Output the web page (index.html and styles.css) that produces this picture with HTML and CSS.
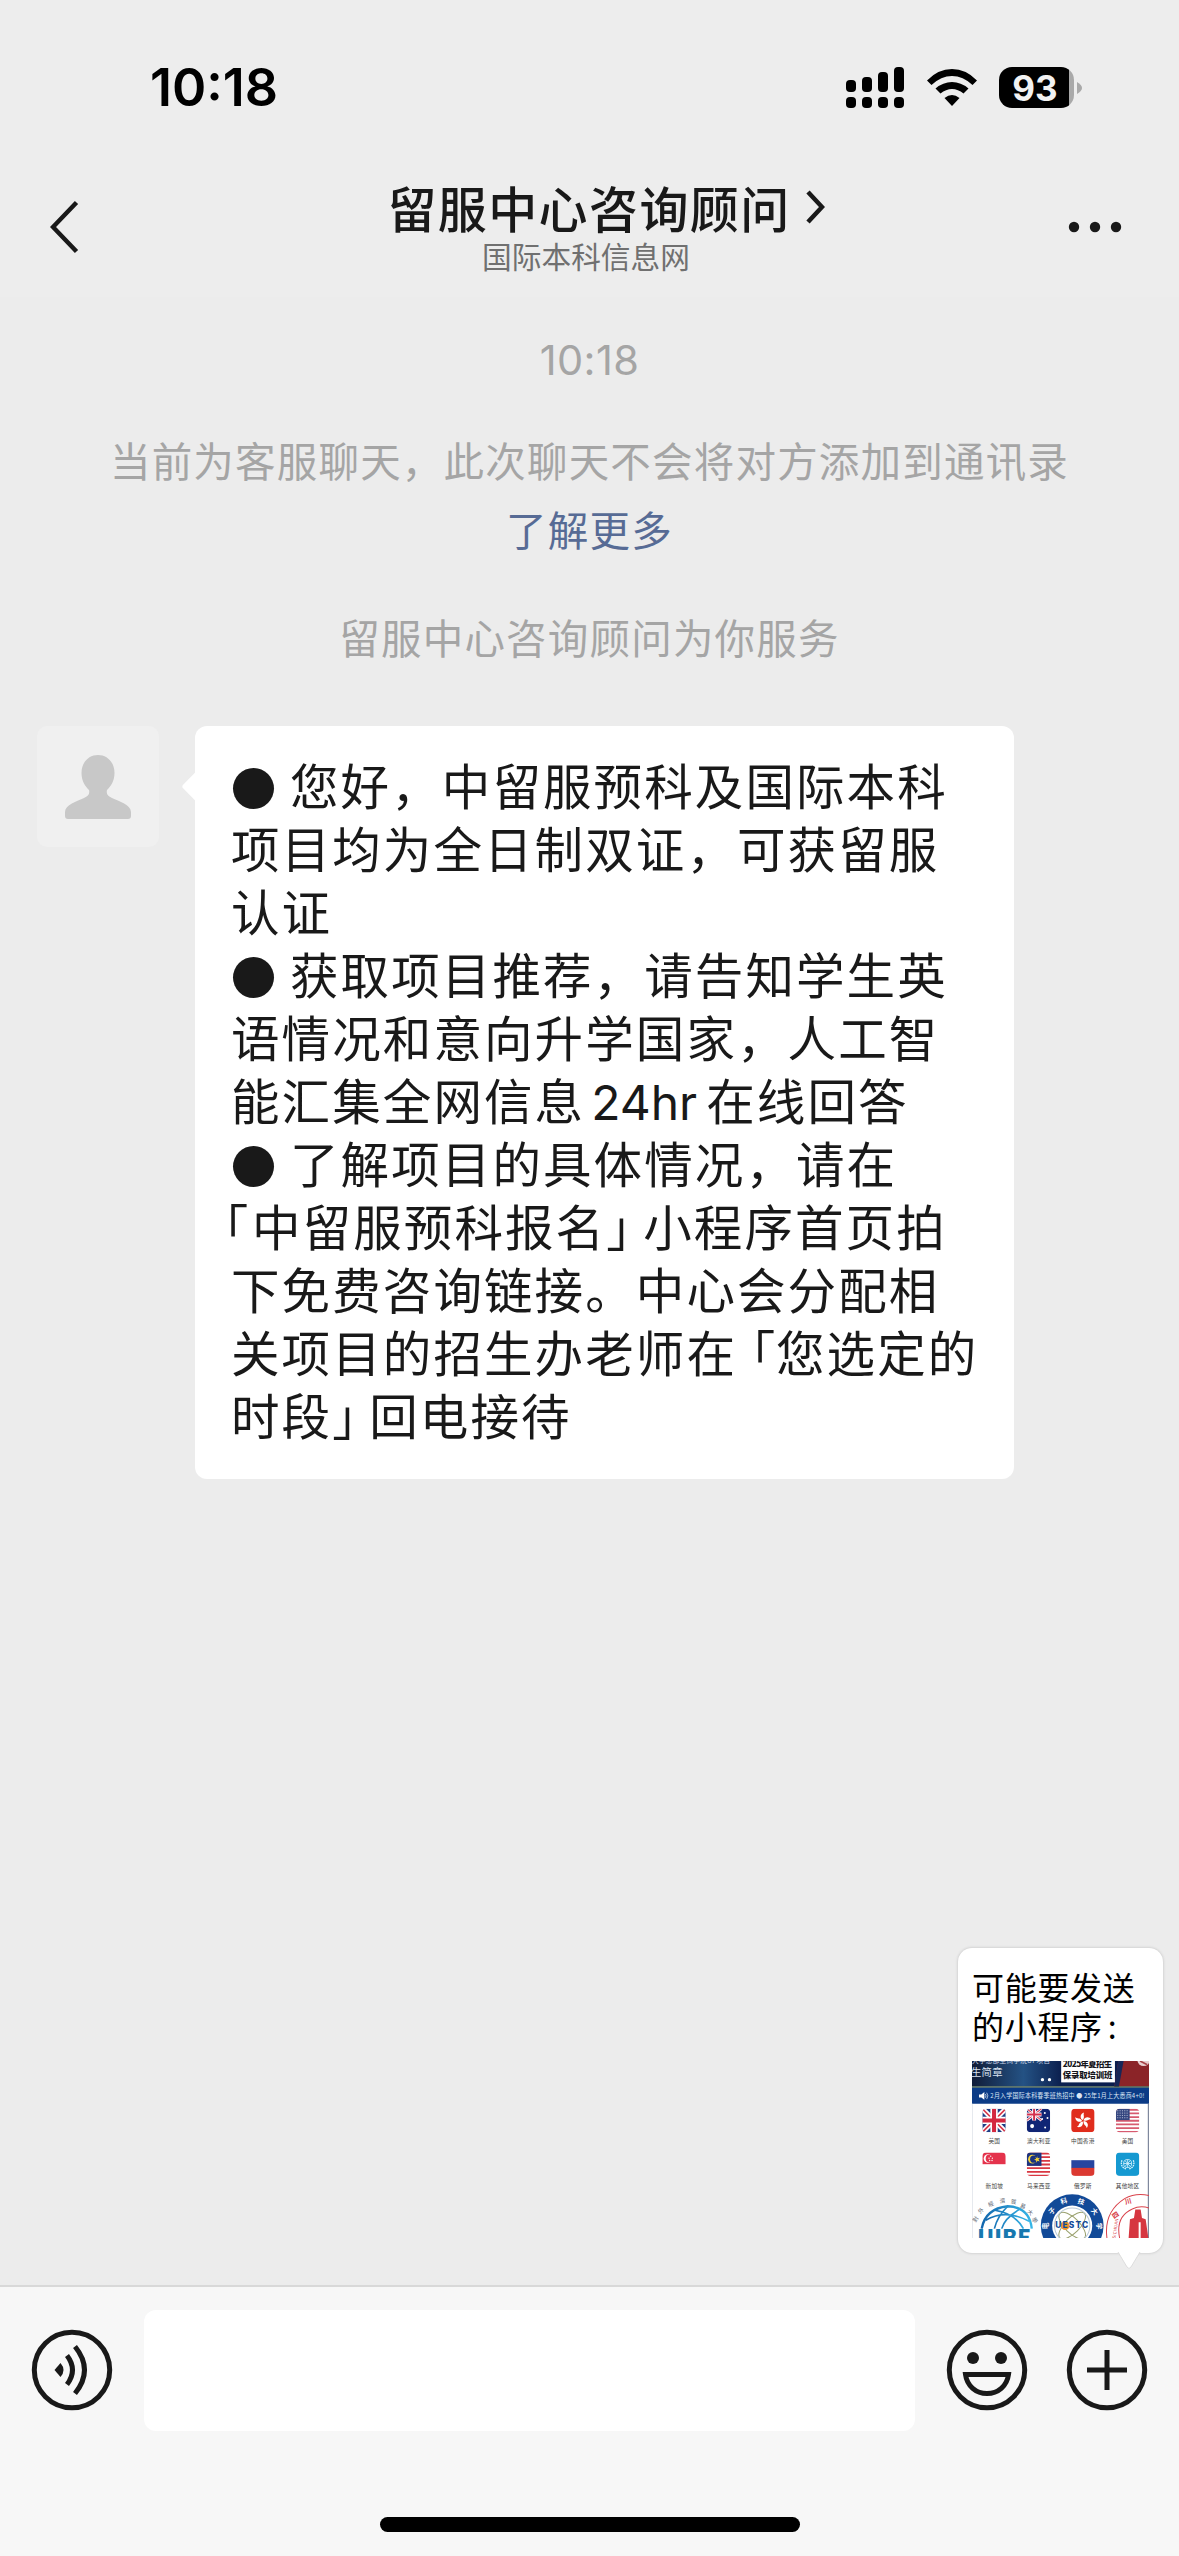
FILE: index.html
```html
<!DOCTYPE html>
<html lang="zh-CN">
<head>
<meta charset="utf-8">
<title>留服中心咨询顾问</title>
<link rel="stylesheet" href="styles.css">
</head>
<body>
<div class="screen">
  <header class="top">
    <div class="status">
      <span class="clock">10:18</span>
      <div class="indicators">
        <svg class="signal" width="58" height="41" viewBox="0 0 58 41">
          <rect x="0" y="13" width="10" height="12" rx="4"/><rect x="16" y="10" width="10" height="15" rx="4"/><rect x="32" y="5" width="10" height="20" rx="4"/><rect x="48" y="0" width="10" height="25" rx="4"/>
          <rect x="0" y="30" width="10" height="11" rx="4"/><rect x="16" y="30" width="10" height="11" rx="4"/><rect x="32" y="30" width="10" height="11" rx="4"/><rect x="48" y="30" width="10" height="11" rx="4"/>
        </svg>
        <svg class="wifi" width="50" height="38" viewBox="0 0 50 38">
          <path d="M0 11.500Q11 0 25 0T50 11.500L45.500 16Q36 7 25 7T4.500 16Z"/>
          <path d="M8.500 19.500Q16 13 25 13T41.500 19.500L36.500 24.500Q31 20 25 20T13.500 24.500Z"/>
          <path d="M17.500 29Q25 23 32.500 29L25 37Z"/>
        </svg>
        <div class="battery"><span class="level">93</span><svg class="nub" width="5" height="12" viewBox="0 0 5 12"><path d="M0 0Q5 3 5 6T0 12Z"/></svg></div>
      </div>
    </div>
    <div class="nav">
      <svg class="back" width="29" height="54" viewBox="0 0 29 54"><path d="M26.500 2.500L3 27L26.500 51.500"/></svg>
      <div class="heading">
        <div class="title">留服中心咨询顾问<svg class="more" width="19" height="34" viewBox="0 0 19 34"><path d="M2 2L16 17L2 32"/></svg></div>
        <div class="subtitle">国际本科信息网</div>
      </div>
      <svg class="dots" width="54" height="12" viewBox="0 0 54 12"><circle cx="6" cy="6" r="5.200"/><circle cx="27" cy="6" r="5.200"/><circle cx="48" cy="6" r="5.200"/></svg>
    </div>
  </header>

  <main class="chat">
    <div class="time">10:18</div>
    <div class="notice">当前为客服聊天，此次聊天不会将对方添加到通讯录</div>
    <a class="notice link">了解更多</a>
    <div class="notice service">留服中心咨询顾问为你服务</div>

    <div class="message">
      <div class="avatar">
        <svg width="66" height="64" viewBox="0 0 66 64"><path d="M33 0C42 0 49.500 7 49.500 18C49.500 26 46 31 42 35C41 39 43 41 47 43C54 46 66 50 66 57V61Q66 64 63 64H3Q0 64 0 61V57C0 50 12 46 19 43C23 41 25 39 24 35C20 31 16.500 26 16.500 18C16.500 7 24 0 33 0Z"/></svg>
      </div>
      <div class="bubble">
        <p><i class="bullet"></i>您好，中留服预科及国际本科</p>
        <p>项目均为全日制双证，可获留服</p>
        <p>认证</p>
        <p><i class="bullet"></i>获取项目推荐，请告知学生英</p>
        <p>语情况和意向升学国家，人工智</p>
        <p>能汇集全网信息<span class="latin">24hr</span>在线回答</p>
        <p><i class="bullet"></i>了解项目的具体情况，请在</p>
        <p><span class="bracket start">「</span>中留服预科报名<span class="bracket close">」</span>小程序首页拍</p>
        <p>下免费咨询链接。中心会分配相</p>
        <p>关项目的招生办老师在<span class="bracket open">「</span>您选定的</p>
        <p>时段<span class="bracket close">」</span>回电接待</p>
      </div>
    </div>

    <aside class="suggest">
      <p>可能要发送</p>
      <p>的小程序<span class="colon">:</span></p>
      <svg class="thumb" width="177" height="177" viewBox="36 33 530 530">
        <defs>
          <linearGradient id="navy" x1="0" x2="1"><stop offset="0" stop-color="#101c38"/><stop offset=".35" stop-color="#245284"/><stop offset=".6" stop-color="#0c2150"/><stop offset="1" stop-color="#0a1d4d"/></linearGradient>
          <linearGradient id="globe" x1="0" x2="1"><stop offset="0" stop-color="#1166ad"/><stop offset="1" stop-color="#36b6e8"/></linearGradient>
          <clipPath id="tile"><rect width="70" height="70" rx="12"/></clipPath>
        </defs>
        <rect x="36" y="33" width="530" height="530" fill="#fff"/>
        <rect x="36" y="33" width="440" height="76" fill="url(#navy)"/>
        <path d="M474 33H566V109H462Z" fill="#8b2428"/>
        <path d="M474 33H490L476 109H462Z" fill="#172657"/>
        <text x="36" y="40" font-size="20" fill="#c9d5e6">大学总部生商学院UP项目</text>
        <text x="33" y="79" font-size="31" fill="#d9e1ee">生简章</text>
        <circle cx="247" cy="89" r="5" fill="#fff"/><circle cx="268" cy="89" r="5" fill="#fff"/>
        <rect x="303" y="28" width="161" height="69" fill="#fff"/>
        <g font-size="25" font-weight="900" fill="#15151b"><text x="308" y="51" textLength="148">2025年夏招生</text><text x="308" y="84" textLength="149">保录取培训班</text></g>
        <circle cx="550" cy="29" r="19" fill="#e8cfd0"/><path d="M539 33L561 44" stroke="#a74347" stroke-width="5"/>
        <rect x="36" y="109" width="530" height="4" fill="#304d34"/>
        <rect x="36" y="113" width="530" height="48" fill="#0b3b86"/>
        <path d="M57 133H64L73 126V149L64 142H57Z" fill="#fff"/><path d="M76 132Q80 137 76 143M80 128Q87 137 80 147" fill="none" stroke="#fff" stroke-width="2"/>
        <text x="91" y="144" font-size="19" fill="#dce6f5" textLength="462" lengthAdjust="spacingAndGlyphs">2月入学国际本科春季班热招中 ● 25年1月上大悉商4+0!</text>
        <path d="M564 161V563" stroke="#667089" stroke-width="3"/><path d="M37 161V563" stroke="#d2d7df" stroke-width="2"/>

        <g transform="translate(67 176)" clip-path="url(#tile)">
          <rect width="70" height="70" fill="#203f86"/><path d="M0 0L70 70M70 0L0 70" stroke="#fff" stroke-width="15"/><path d="M0 0L70 70M70 0L0 70" stroke="#d8384b" stroke-width="5"/><path d="M35 0V70M0 35H70" stroke="#fff" stroke-width="22"/><path d="M35 0V70M0 35H70" stroke="#d42840" stroke-width="12"/>
        </g>
        <g transform="translate(200 176)" clip-path="url(#tile)">
          <rect width="70" height="70" fill="#102575"/><path d="M0 0L44 35M44 0L0 35" stroke="#fff" stroke-width="8"/><path d="M0 0L44 35M44 0L0 35" stroke="#db3b55" stroke-width="3"/><path d="M22 0V35M0 17H44" stroke="#fff" stroke-width="12"/><path d="M22 0V35M0 17H44" stroke="#d3304d" stroke-width="6"/><g fill="#fff"><circle cx="16" cy="52" r="6"/><circle cx="54" cy="13" r="3"/><circle cx="46" cy="31" r="3"/><circle cx="62" cy="28" r="3"/><circle cx="55" cy="56" r="3"/></g>
        </g>
        <g transform="translate(333 176)" clip-path="url(#tile)">
          <rect width="70" height="70" fill="#e02d1d"/>
          <g transform="translate(35 36)" fill="#fff"><path id="petal" d="M-1-2C-10-9-8-22 4-25C-1-18 8-12-1-2Z"/><use href="#petal" transform="rotate(72)"/><use href="#petal" transform="rotate(144)"/><use href="#petal" transform="rotate(216)"/><use href="#petal" transform="rotate(288)"/></g>
        </g>
        <g transform="translate(467 176)" clip-path="url(#tile)">
          <rect width="70" height="70" fill="#fff"/><path d="M0 3H70M0 14H70M0 25H70M0 36H70M0 47H70M0 58H70M0 69H70" stroke="#d75b70" stroke-width="5.500"/><rect width="41" height="34" fill="#34467f"/><path d="M4 6H39M4 13H39M4 20H39M4 27H39" stroke="#d5daeb" stroke-width="2.500" stroke-dasharray="3 4"/>
        </g>
        <g transform="translate(67 307)" clip-path="url(#tile)">
          <rect width="70" height="70" fill="#fff"/><rect width="70" height="35" fill="#e4334c"/><circle cx="17" cy="18" r="13" fill="#fff"/><circle cx="22" cy="18" r="12" fill="#e4334c"/><g fill="#fff"><circle cx="25" cy="11" r="2"/><circle cx="20" cy="17" r="2"/><circle cx="30" cy="17" r="2"/><circle cx="22" cy="24" r="2"/><circle cx="29" cy="24" r="2"/></g>
        </g>
        <g transform="translate(200 307)" clip-path="url(#tile)">
          <rect width="70" height="70" fill="#fff"/><path d="M0 3H70M0 14H70M0 25H70M0 36H70M0 47H70M0 58H70M0 69H70" stroke="#d93742" stroke-width="5.500"/><rect width="44" height="40" fill="#1c3480"/><circle cx="17" cy="20" r="13" fill="#f5d33b"/><circle cx="21" cy="20" r="11" fill="#1c3480"/><path d="M31 10L33 17L40 16L35 21L39 27L32 25L29 31L28 24L22 22L28 19L26 13L31 17Z" fill="#f5d33b"/>
        </g>
        <g transform="translate(333 307)" clip-path="url(#tile)"><rect width="70" height="70" fill="#fff"/><rect y="23" width="70" height="24" fill="#2745a0"/><rect y="46" width="70" height="24" fill="#db3931"/></g>
        <g transform="translate(467 307)" clip-path="url(#tile)">
          <rect width="70" height="70" fill="#1599d1"/><g fill="none" stroke="#d7f2fc" stroke-width="2.500"><circle cx="35" cy="33" r="12"/><path d="M35 21V45M23 33H47M27 24L43 42M43 24L27 42"/><path d="M18 23Q11 43 32 50M52 23Q59 43 38 50" stroke-dasharray="5 2" stroke-width="4"/></g>
        </g>
        <g font-size="17" fill="#454545" text-anchor="middle">
          <text x="103" y="279">英国</text><text x="236" y="279">澳大利亚</text><text x="368" y="279">中国香港</text><text x="502" y="279">美国</text>
          <text x="103" y="412">新加坡</text><text x="236" y="412">马来西亚</text><text x="368" y="412">俄罗斯</text><text x="502" y="412">其他地区</text>
        </g>

        <g fill="none" stroke="url(#globe)" stroke-width="5">
          <path d="M65 535Q76 475 143 468Q208 470 215 535" stroke-width="7"/><path d="M77 510Q138 475 207 513M105 480Q166 490 190 535M143 468Q112 498 103 535M178 477Q133 504 125 535"/>
        </g>
        <g font-size="17" fill="#5b6470"><text transform="translate(47 517) rotate(-58)">對</text><text transform="translate(61 491) rotate(-43)">外</text><text transform="translate(88 470) rotate(-25)">經</text><text transform="translate(120 459) rotate(-8)">濟</text><text transform="translate(151 460) rotate(7)">貿</text><text transform="translate(178 470) rotate(22)">易</text><text transform="translate(200 486) rotate(40)">大</text><text transform="translate(214 505) rotate(60)">學</text></g>
        <text x="52" y="586" font-size="66" font-weight="900" fill="#1778af" textLength="162">UIBE</text>

        <circle cx="336" cy="526" r="94" fill="#124a98"/><circle cx="336" cy="526" r="60" fill="#fff"/>
        <g fill="none" stroke="#99a06c" stroke-width="3"><ellipse cx="336" cy="526" rx="52" ry="22" transform="rotate(45 336 526)"/><ellipse cx="336" cy="526" rx="52" ry="22" transform="rotate(-45 336 526)"/><circle cx="336" cy="526" r="53" stroke="#b9c9d7"/></g>
        <circle cx="315" cy="526" r="13" fill="#ef952d"/>
        <text x="285" y="534" font-family="Inter" font-size="25" font-weight="800" fill="#124a98" textLength="100">UESTC</text>
        <g font-size="20" font-weight="700" fill="#fff"><text transform="translate(264 537) rotate(-90)">电</text><text transform="translate(274 494) rotate(-48)">子</text><text transform="translate(303 462) rotate(-15)">科</text><text transform="translate(351 458) rotate(17)">技</text><text transform="translate(391 481) rotate(50)">大</text><text transform="translate(409 518) rotate(85)">学</text></g>

        <g fill="none" stroke="#d9434c" stroke-width="3"><path d="M440 563Q430 485 493 445Q528 426 566 436"/><path d="M478 563Q465 499 516 476Q540 464 566 473"/></g>
        <g fill="#d63640"><path d="M505 563L509 507L521 503L525 478H541L545 503L556 507L564 563H541V516H535V563Z"/><g font-size="20" font-weight="700"><text transform="translate(461 506) rotate(-34)">四</text><text transform="translate(496 463) rotate(-14)">川</text></g><text transform="translate(466 565) rotate(-82)" font-size="13">SICHUAN</text></g>
      </svg>
      <svg class="pointer" width="24" height="19" viewBox="0 0 24 19"><path d="M1 0L10 15Q12 18 14 15L23 0"/></svg>
    </aside>
  </main>

  <footer class="composer">
    <div class="controls">
      <svg class="icon" width="82" height="82" viewBox="-41 -41 82 82"><circle r="37.700"/><path class="fill" d="M-17.500 0L-11.500-7Q-5.500 0-11.500 7Z"/><path d="M-5-14.500Q6 0-5 14.500M3-23.500Q22 0 3 23.500"/></svg>
      <div class="input"></div>
      <svg class="icon emoji" width="82" height="82" viewBox="-41 -41 82 82"><circle r="37.700"/><circle class="fill" cx="-14" cy="-12" r="6"/><circle class="fill" cx="14" cy="-12" r="6"/><path d="M-21.500 4.500H21.500C20 16 11 23.500 0 23.500S-20 16-21.500 4.500Z"/></svg>
      <svg class="icon" width="82" height="82" viewBox="-41 -41 82 82"><circle r="37.700"/><path d="M0-20V20M-20 0H20"/></svg>
    </div>
    <div class="home"></div>
  </footer>
</div>
</body>
</html>
```
FILE: styles.css
```css
* { box-sizing: border-box; }
body, p { margin: 0; }
body { font-family: "Noto Sans CJK SC", sans-serif; background: #ececec; color: #191919; }
.screen { width: 1179px; height: 2556px; display: flex; flex-direction: column; overflow: hidden; }

.top { height: 297px; background: #ededed; flex: none; }
.status { height: 176px; padding: 0 97px 0 150px; display: flex; justify-content: space-between; align-items: center; }
.clock { font: 600 52px/60px Inter, sans-serif; letter-spacing: 0; color: #000; }
.indicators { display: flex; align-items: center; margin-top: -1px; }
.wifi { margin: 0 22px 0 23px; }
.battery { display: flex; align-items: center; gap: 3px; }
.level { width: 75px; height: 41px; border-radius: 13px; background: linear-gradient(90deg, #000 70px, #a9a9a9 70px); color: #f2f2f2; font: 700 35px/42px Inter, sans-serif; text-align: center; padding-right: 3px; }
.nub { fill: #a9a9a9; }

.nav { height: 121px; display: flex; align-items: flex-start; padding: 0 57px 0 50px; }
.back, .more { fill: none; stroke: #191919; stroke-width: 4.500; }
.back { margin-top: 24px; }
.heading { flex: 1; text-align: center; padding-left: 25px; margin-top: -2px; }
.title { height: 66px; line-height: 66px; font-size: 49px; font-weight: 500; letter-spacing: 1.400px; display: flex; justify-content: center; align-items: center; padding-left: 40px; }
.more { margin-left: 15px; }
.subtitle { font-size: 29.700px; line-height: 32px; color: #707070; }
.dots { margin-top: 45px; fill: #191919; }

.chat { flex: 1; display: flex; flex-direction: column; position: relative; }
.time { font: 400 41.500px/50px Inter, sans-serif; color: #a5a5a5; text-align: center; margin-top: 38px; letter-spacing: .400px; }
.notice { font-size: 40.500px; line-height: 60px; letter-spacing: 1.200px; text-align: center; color: #a5a5a5; margin-top: 45px; }
.notice.link { color: #576b95; margin-top: 9px; }
.notice.service { margin-top: 48px; }

.message { display: flex; margin: 59px 0 0 37px; align-items: flex-start; }
.avatar { width: 122px; height: 121px; border-radius: 10px; background: #f0f0f0; display: grid; place-items: center; }
.avatar svg { fill: #c8c8c8; }
.bubble { position: relative; width: 819px; height: 753px; margin-left: 36px; border-radius: 12px; background: #fff; padding: 27px 0 0 36px; font-size: 48.500px; line-height: 63px; letter-spacing: 2.100px; white-space: nowrap; }
.bubble p { height: 63px; }
.bubble::before { content: ""; position: absolute; left: -9px; top: 49px; width: 23px; height: 23px; background: #fff; border-radius: 3px; transform: rotate(45deg); }
.bullet { display: inline-block; width: 41px; height: 41px; border-radius: 50%; background: #191919; margin: 0 16px 0 2px; vertical-align: -4px; }
.latin { display: inline-block; width: 121px; padding-left: 6px; font-family: Inter, sans-serif; font-size: 48px; line-height: 60px; letter-spacing: 0; }
.bracket { display: inline-block; font-feature-settings: "halt"; letter-spacing: 0; }
.start { width: 21px; text-indent: -7px; }
.close { width: 37px; }
.open { width: 39px; padding-left: 14px; }

.suggest { position: absolute; left: 958px; top: 1651px; width: 205px; height: 305px; padding: 19px 14px 0; border-radius: 14px; background: #fff; box-shadow: 0 0 3px #bbb; color: #000; font-size: 32px; line-height: 39px; letter-spacing: .700px; white-space: nowrap; }
.thumb { display: block; margin-top: 16px; }
.colon { margin-left: 5px; }
.pointer { position: absolute; left: 159px; top: 304px; fill: #fff; stroke: #ddd; stroke-width: 1; }

.composer { flex: none; height: 271px; border-top: 2px solid #d8d8d8; background: #f7f7f7; display: flex; flex-direction: column; align-items: center; }
.controls { width: 100%; margin-top: 23px; padding: 0 31px; display: flex; align-items: center; }
.input { width: 771px; height: 121px; margin: 0 31px; border-radius: 12px; background: #fff; }
.icon { fill: none; stroke: #191919; stroke-width: 5; margin-bottom: 2px; }
.icon .fill { fill: #191919; stroke: none; }
.emoji { margin-right: 38px; }
.home { width: 420px; height: 15px; border-radius: 8px; background: #000; margin-top: 86px; }
```
